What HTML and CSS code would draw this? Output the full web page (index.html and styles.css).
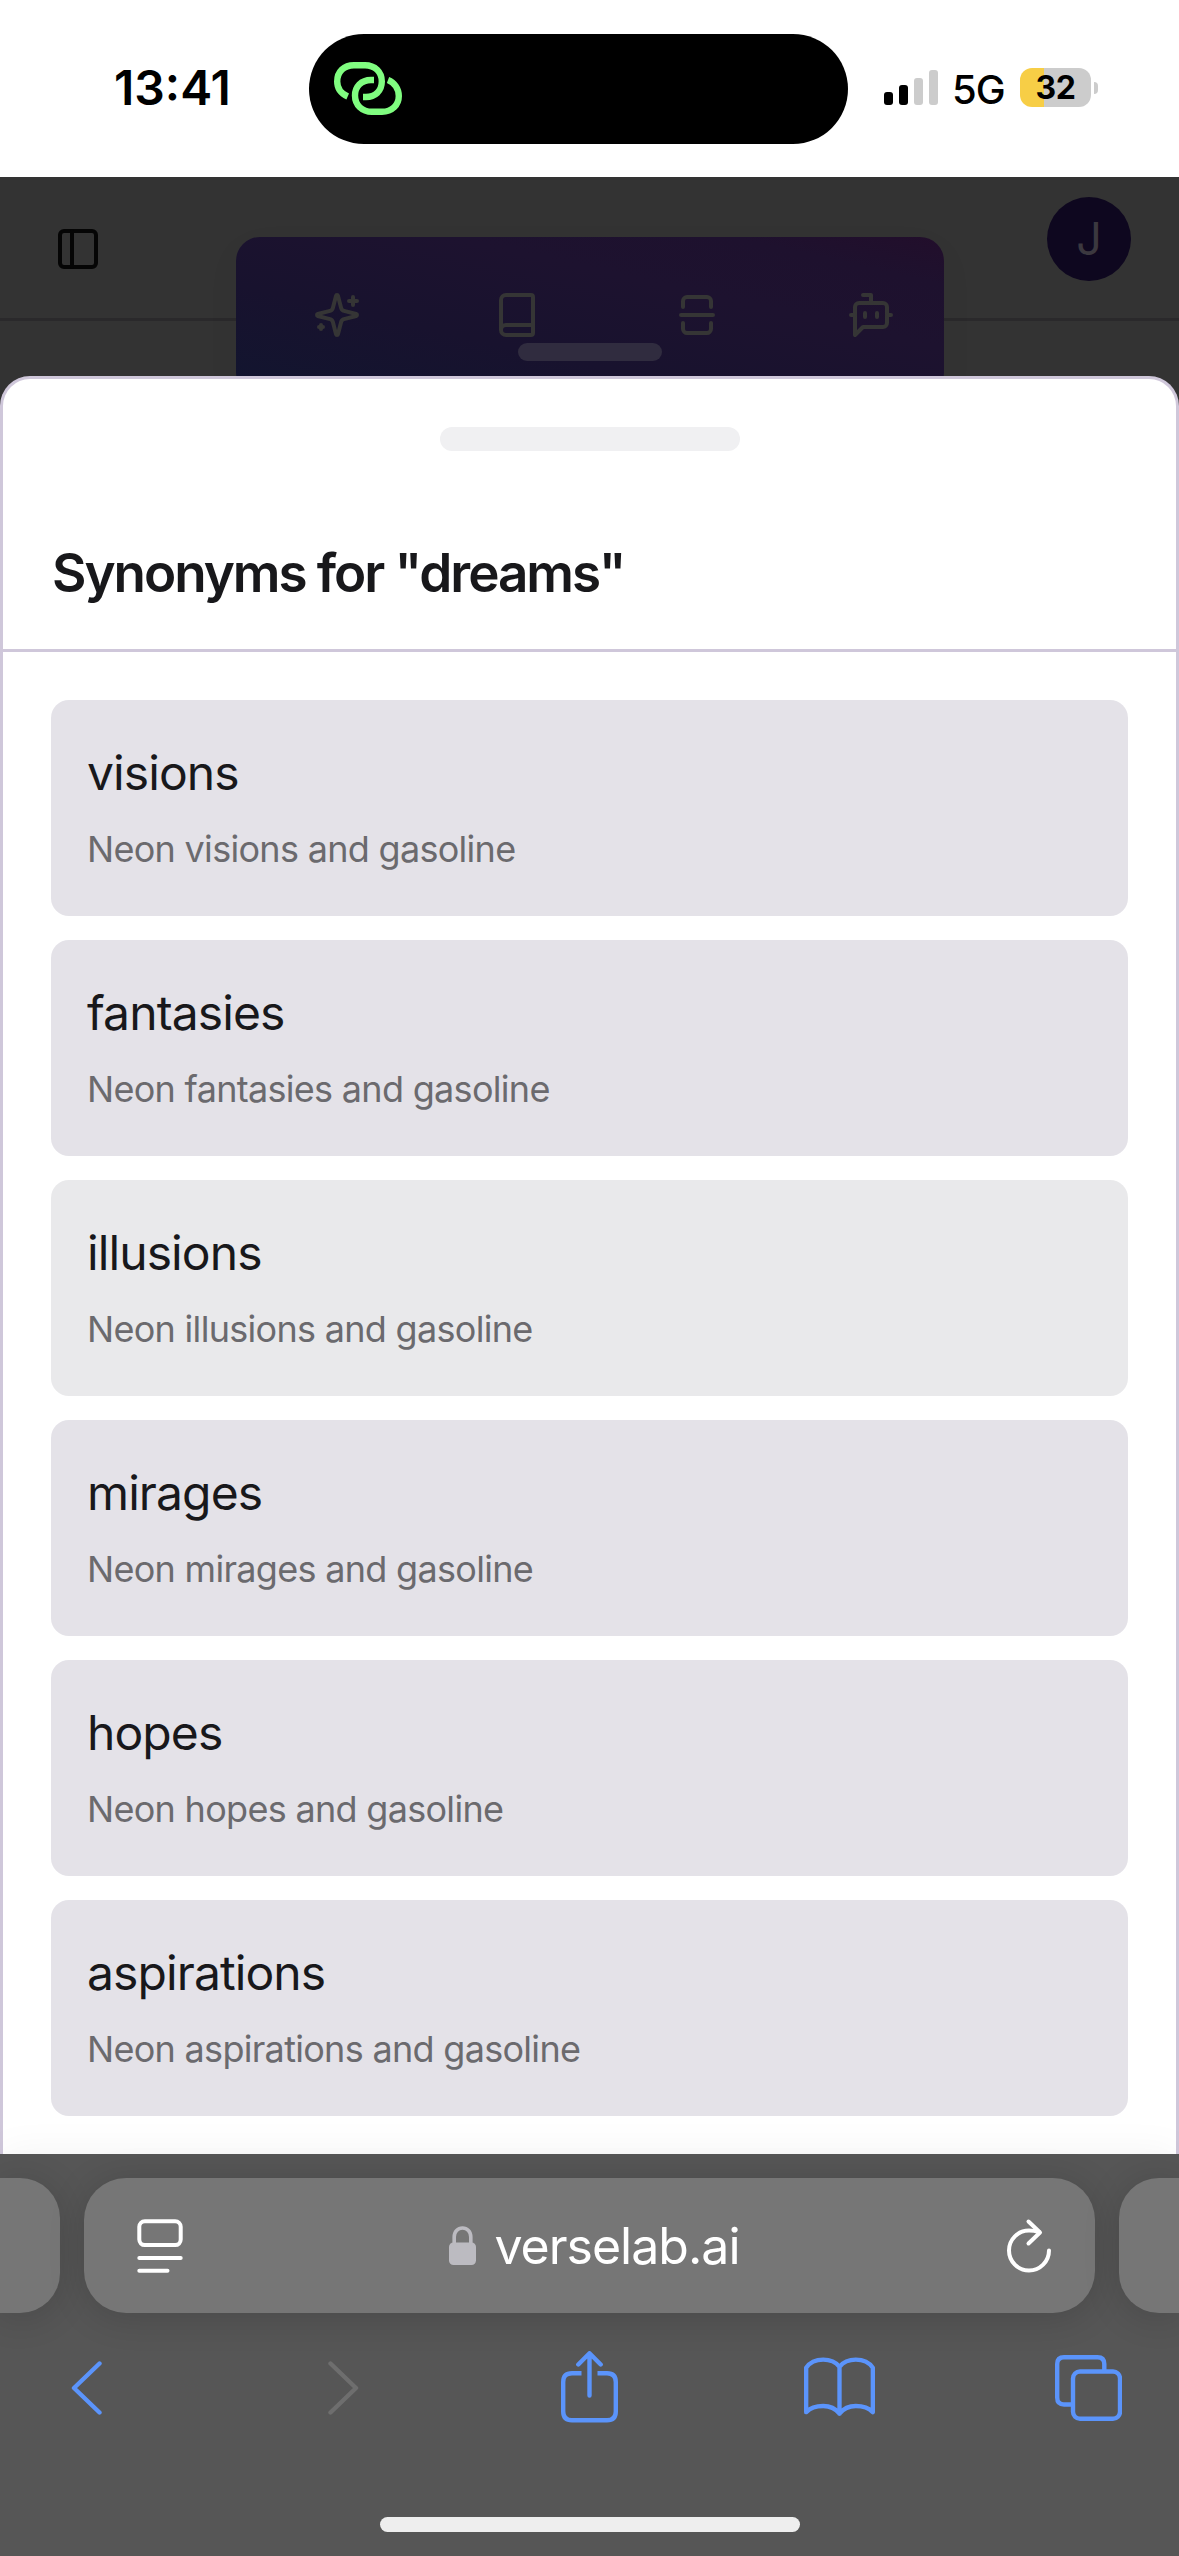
FILE: index.html
```html
<!DOCTYPE html>
<html lang="en">
<head>
<meta charset="utf-8">
<title>VerseLab</title>
<link rel="stylesheet" href="styles.css">
</head>
<body>
<div class="phone">
  <header class="status">
    <span class="time">13:41</span>
    <div class="island">
      <svg class="link-icon" viewBox="0 0 68 53" fill="none" stroke="#80fd80" stroke-width="6.4">
        <path d="M13.700 34.500C7 31.500 3.200 26 3.200 19.500C3.200 9.500 10 3.200 20 3.200H31C41 3.200 47.800 10 47.800 19.500C47.800 29 41 35 32 35H29"/>
        <path d="M40 18H37C27 18 21 25 21 33.500C21 43 28 49.800 38 49.800H48C58 49.800 64.800 43 64.800 34C64.800 27 60.500 20.500 54 18"/>
      </svg>
    </div>
    <div class="indicators">
      <div class="signal"><i class="bar b1"></i><i class="bar b2"></i><i class="bar b3"></i><i class="bar b4"></i></div>
      <span class="network">5G</span>
      <div class="battery">32</div>
      <i class="nub"></i>
    </div>
  </header>

  <main class="page">
    <div class="appbar">
      <svg class="icon sidebar-icon" viewBox="0 0 24 24"><rect x="3" y="3" width="18" height="18" rx="2"/><path d="M9 3v18"/></svg>
      <div class="avatar">J</div>
    </div>
    <div class="toolpanel">
      <div class="tools">
        <svg class="icon" viewBox="0 0 24 24"><path d="M9.937 15.500A2 2 0 0 0 8.500 14.063l-6.135-1.582a.5.5 0 0 1 0-.962L8.500 9.936A2 2 0 0 0 9.937 8.500l1.582-6.135a.5.5 0 0 1 .963 0L14.063 8.500A2 2 0 0 0 15.500 9.937l6.135 1.581a.5.5 0 0 1 0 .964L15.500 14.063a2 2 0 0 0-1.437 1.437l-1.582 6.135a.5.5 0 0 1-.963 0z"/><path d="M20 3v4"/><path d="M22 5h-4"/><path d="M4 17v2"/><path d="M5 18H3"/></svg>
        <svg class="icon" viewBox="0 0 24 24"><path d="M4 19.500v-15A2.500 2.500 0 0 1 6.500 2H19a1 1 0 0 1 1 1v18a1 1 0 0 1-1 1H6.500a1 1 0 0 1 0-5H20"/></svg>
        <svg class="icon" viewBox="0 0 24 24"><path d="M5 8V5c0-1 1-2 2-2h10c1 0 2 1 2 2v3"/><path d="M19 16v3c0 1-1 2-2 2H7c-1 0-2-1-2-2v-3"/><path d="M4 12h16"/></svg>
        <svg class="icon bot" viewBox="0 0 24 24"><path d="M12 6V2H8"/><path d="m8 18-4 4V8a2 2 0 0 1 2-2h12a2 2 0 0 1 2 2v8a2 2 0 0 1-2 2Z"/><path d="M2 12h2"/><path d="M9 11v2"/><path d="M15 11v2"/><path d="M20 12h2"/></svg>
      </div>
      <div class="panel-handle"></div>
    </div>
  </main>

  <section class="sheet">
    <div class="sheet-head">
      <div class="grabber"></div>
      <h1 class="title">Synonyms for "dreams"</h1>
    </div>
    <ul class="list">
      <li class="card"><span class="word">visions</span><span class="line">Neon visions and gasoline</span></li>
      <li class="card"><span class="word">fantasies</span><span class="line">Neon fantasies and gasoline</span></li>
      <li class="card active"><span class="word">illusions</span><span class="line">Neon illusions and gasoline</span></li>
      <li class="card"><span class="word">mirages</span><span class="line">Neon mirages and gasoline</span></li>
      <li class="card"><span class="word">hopes</span><span class="line">Neon hopes and gasoline</span></li>
      <li class="card"><span class="word">aspirations</span><span class="line">Neon aspirations and gasoline</span></li>
    </ul>
  </section>

  <footer class="browser">
    <div class="tabs">
      <div class="tab tab-prev"></div>
      <div class="tab address">
        <svg class="reader" viewBox="0 0 46 54" fill="none" stroke="#fff" stroke-width="4" stroke-linecap="round"><rect x="2.300" y="2.300" width="41.400" height="23.800" rx="5.500"/><path d="M2.300 39H43.700M2.300 51.700H30.500"/></svg>
        <div class="host">
          <svg class="lock" viewBox="0 0 27 39"><rect y="16.500" width="27" height="22.500" rx="4.500" fill="#bcbbc1"/><path d="M5.200 18V11C5.200 5.500 8.800 2 13.500 2S21.800 5.500 21.800 11V18" fill="none" stroke="#bcbbc1" stroke-width="3.600"/></svg>
          <span class="domain">verselab.ai</span>
        </div>
        <svg class="reload" viewBox="0 0 46 56" fill="none" stroke="#fff" stroke-width="4" stroke-linecap="round" stroke-linejoin="round"><path d="M43 32.500A20 20 0 1 1 23 12.500Q28 12.500 33 14"/><path d="M22.500 3.500L34 14.500L22.500 25.500"/></svg>
      </div>
      <div class="tab tab-next"></div>
    </div>
    <nav class="nav">
      <svg class="nav-back" viewBox="0 0 31 54"><path d="M28.500 2.500L3 27L28.500 51.500"/></svg>
      <svg class="nav-forward" viewBox="0 0 31 54"><path d="M2.500 2.500L28 27L2.500 51.500"/></svg>
      <svg class="nav-share" viewBox="0 0 57 72"><path class="butt" d="M20.500 22.300H11Q2.200 22.300 2.200 31V60.500Q2.200 69.300 11 69.300H46Q54.800 69.300 54.800 60.500V31Q54.800 22.300 46 22.300H36.500"/><path d="M28.500 44.500V3M17.300 13.500L28.500 2.300L39.700 13.500"/></svg>
      <svg class="nav-book" viewBox="0 0 72 60"><path d="M36 9.500C32 4.500 26 2.300 19.500 2.300C12.500 2.300 6 5 2.200 10.500V55.500C6 51.500 12.500 49.300 19.500 49.300C26 49.300 32 52 36 57C40 52 46 49.300 52.500 49.300C59.500 49.300 66 51.500 69.800 55.500V10.500C66 5 59.500 2.300 52.500 2.300C46 2.300 40 4.500 36 9.500ZM36 9.500V57"/></svg>
      <svg class="nav-tabs" viewBox="0 0 67 66"><rect x="18" y="16.500" width="47" height="47.300" rx="7"/><path class="butt" d="M18 49.500H9Q2.200 49.500 2.200 42.500V9Q2.200 2.200 9 2.200H42.500Q49.300 2.200 49.300 9V16.500"/></svg>
    </nav>
    <div class="home"></div>
  </footer>
</div>
</body>
</html>
```
FILE: styles.css
```css
* { box-sizing: border-box; }
body { margin: 0; font-family: Inter, "Liberation Sans", sans-serif; }
svg { display: block; flex: none; }
.phone { width: 1179px; height: 2556px; display: flex; flex-direction: column; overflow: hidden; background: #333; }

.status { height: 177px; flex: none; background: #fff; display: flex; align-items: flex-start; color: #000; }
.time { width: 309px; padding: 59px 0 0 114px; font-size: 48px; line-height: 58px; font-weight: 600; letter-spacing: 0; }
.island { width: 539px; height: 110px; margin-top: 34px; border-radius: 55px; background: #000; padding: 28px 25px; }
.link-icon { width: 68px; height: 53px; }
.indicators { display: flex; align-items: flex-start; padding: 68px 0 0 36px; }
.signal { display: flex; align-items: flex-end; gap: 6px; height: 37px; }
.bar { width: 9px; border-radius: 3px; background: #ccc; }
.b1 { height: 13px; background: #000; }
.b2 { height: 20px; background: #000; }
.b3 { height: 27px; }
.b4 { height: 35px; }
.network { width: 66px; margin-left: 14px; font-size: 40px; line-height: 43px; font-weight: 500; letter-spacing: -1px; }
.battery { width: 71px; height: 39px; margin-left: 2px; border-radius: 12px; background: linear-gradient(90deg, #f7ce46 24px, #ccc 24px); font-size: 32px; line-height: 39px; font-weight: 700; text-align: center; letter-spacing: -0.5px; }
.nub { width: 4px; height: 12px; margin: 14px 0 0 3px; border-radius: 0 4px 4px 0; background: #ccc; }

.page { height: 199px; flex: none; background: #333; position: relative; }
.appbar { height: 144px; border-bottom: 3px solid #2a292b; display: flex; justify-content: space-between; align-items: flex-start; padding: 20px 48px 0 54px; }
.icon { width: 48px; height: 48px; fill: none; stroke: #353535; stroke-width: 2; stroke-linecap: round; stroke-linejoin: round; }
.sidebar-icon { margin-top: 28px; stroke: #050505; }
.avatar { width: 84px; height: 84px; border-radius: 50%; background: #0e071f; color: #3b383f; font-size: 45px; line-height: 84px; text-align: center; }
.toolpanel { position: absolute; left: 236px; top: 60px; width: 708px; height: 160px; border-radius: 24px; background: linear-gradient(to top right, #11152f 0%, #18122e 35%, #1d122f 65%, #1e112e 85%, #220e2b 100%); box-shadow: 0 12px 36px rgba(0,0,0,.04); padding-top: 54px; }
.tools { display: flex; gap: 132px; padding-left: 77px; }
.bot { margin-left: -6px; }
.panel-handle { width: 144px; height: 18px; margin: 4px auto 0; border-radius: 9px; background: #302c3f; }

.sheet { height: 1778px; flex: none; position: relative; background: #fff; border: 3px solid #cfc7da; border-bottom: 0; border-radius: 30px 30px 0 0; }
.sheet-head { height: 273px; border-bottom: 3px solid #cfc7da; padding-top: 48px; }
.grabber { width: 300px; height: 24px; margin: 0 auto; border-radius: 12px; background: #f0f0f2; }
.title { margin: 92px 0 0 49px; font-size: 53px; line-height: 60px; font-weight: 600; letter-spacing: -2.05px; color: #18181b; }
.list { list-style: none; margin: 0; padding: 48px; display: flex; flex-direction: column; gap: 24px; }
.card { height: 216px; border-radius: 18px; background: #e4e2e8; padding: 37px 36px; display: flex; flex-direction: column; }
.active { background: #e9e9eb; }
.word { font-size: 48px; line-height: 72px; color: #18181b; letter-spacing: -0.9px; }
.line { margin-top: 13px; font-size: 36px; line-height: 54px; color: #6b6a6e; letter-spacing: -0.7px; }

.browser { flex: 1; position: relative; background: #565656; padding-top: 24px; box-shadow: 0 0 40px rgba(0,0,0,.05); }
.tabs { display: flex; gap: 24px; }
.tab { height: 135px; flex: none; background: #767676; box-shadow: 0 4px 36px rgba(0,0,0,.15); }
.tab-prev { width: 60px; border-radius: 0 40px 40px 0; }
.tab-next { width: 60px; border-radius: 40px 0 0 40px; }
.address { width: 1011px; border-radius: 42px; display: flex; align-items: center; justify-content: space-between; padding: 0 43px 0 53px; }
.reader { width: 46px; height: 54px; }
.host { display: flex; align-items: center; gap: 18px; }
.lock { width: 27px; height: 39px; }
.domain { font-size: 50px; line-height: 60px; color: #fff; letter-spacing: -1px; }
.reload { width: 46px; height: 56px; }
.nav { height: 72px; margin-top: 38px; padding-left: 71px; display: flex; align-items: center; }
.nav svg { fill: none; stroke: #5b94fb; stroke-width: 4.400; stroke-linecap: round; stroke-linejoin: round; }
.nav .butt { stroke-linecap: butt; }
.nav .nav-back, .nav .nav-forward { width: 31px; height: 54px; margin-top: 2px; }
.nav .nav-forward { margin-left: 226px; stroke: #6e6e6e; }
.nav-share { width: 57px; height: 72px; margin-left: 202px; }
.nav-book { width: 71px; height: 60px; margin-left: 186px; }
.nav-tabs { width: 67px; height: 66px; margin: 2px 0 0 180px; }
.home { width: 420px; height: 15px; margin: 94px auto 0; border-radius: 8px; background: #eee; }
```
